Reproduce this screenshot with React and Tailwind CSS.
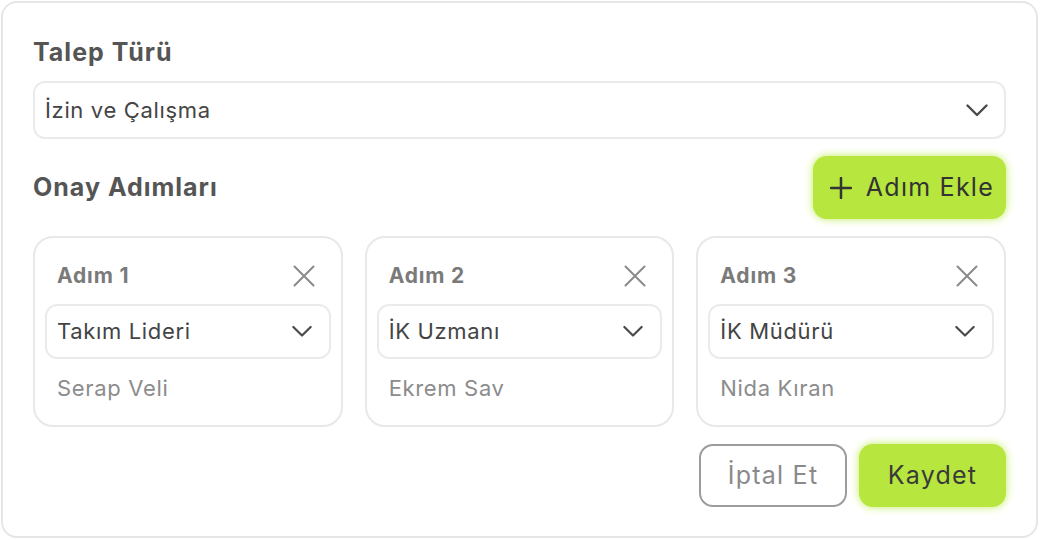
const steps = [
  { title: "Adım 1", role: "Takım Lideri", person: "Serap Veli" },
  { title: "Adım 2", role: "İK Uzmanı", person: "Ekrem Sav" },
  { title: "Adım 3", role: "İK Müdürü", person: "Nida Kıran" },
];

function Chevron({ className }) {
  return (
    <svg width="22" height="13" viewBox="0 0 22 13" fill="none" className={className}>
      <path d="M1.5 1.5 11 11l9.5-9.5" stroke="currentColor" strokeWidth="2.4" strokeLinecap="round" strokeLinejoin="round" />
    </svg>
  );
}

function Cross() {
  return (
    <svg width="22" height="22" viewBox="0 0 22 22" fill="none" className="text-[#8a8a8a]">
      <path d="M1.5 1.5l19 19M20.5 1.5l-19 19" stroke="currentColor" strokeWidth="2" strokeLinecap="round" />
    </svg>
  );
}

function PlusIcon() {
  return (
    <svg width="22" height="22" viewBox="0 0 22 22" fill="none">
      <path d="M11 1v20M1 11h20" stroke="currentColor" strokeWidth="2.5" strokeLinecap="round" />
    </svg>
  );
}

function StepCard({ step }) {
  return (
    <div className="flex flex-col rounded-[20px] border-2 border-[#e8e8e8] px-[10px] pt-[24px] pb-[23px]">
      <div className="flex h-[28px] items-center justify-between pl-[12px] pr-[16px]">
        <span className="text-[21px] font-bold tracking-[0.04em] text-[#7a7a7a]">{step.title}</span>
        <Cross />
      </div>
      <div className="mt-[14px] flex h-[55px] items-center justify-between rounded-[12px] border-2 border-[#ebebeb] pl-[10px] pr-[17px]">
        <span className="text-[22px] tracking-[0.03em] text-[#444]">{step.role}</span>
        <Chevron className="text-[#4a4a4a] w-[20px]" />
      </div>
      <div className="mt-[15px] h-[28px] pl-[12px] text-[22px] leading-[28px] tracking-[0.03em] text-[#8c8c8c]">{step.person}</div>
    </div>
  );
}

export default function App() {
  return (
    <div className="h-[540px] w-[1040px] bg-white p-px" style={{ fontFamily: "Inter, 'Noto Sans', sans-serif" }}>
      <div className="flex h-[537px] w-[1037px] flex-col rounded-[16px] border-2 border-[#e6e6e6] px-[30px] pt-[33px]">
        <h2 className="h-[32px] text-[25px] font-bold leading-[32px] tracking-[0.04em] text-[#555]">Talep Türü</h2>
        <div className="mt-[13px] flex h-[58px] items-center justify-between rounded-[12px] border-2 border-[#ebebeb] pl-[10px] pr-[16px]">
          <span className="text-[22px] tracking-[0.03em] text-[#444]">İzin ve Çalışma</span>
          <Chevron className="text-[#4a4a4a]" />
        </div>

        <div className="mt-[17px] flex items-center justify-between">
          <h2 className="text-[25px] font-bold tracking-[0.04em] text-[#555]">Onay Adımları</h2>
          <button className="flex h-[63px] items-center gap-[14px] rounded-[14px] bg-[#b7e63f] pl-[17px] pr-[12px] text-[25px] tracking-[0.05em] text-[#333] shadow-[0_0_8px_#c2ec5c]">
            <PlusIcon />
            Adım Ekle
          </button>
        </div>

        <div className="mt-[17px] grid grid-cols-3 gap-[22px]">
          {steps.map((s) => (
            <StepCard key={s.title} step={s} />
          ))}
        </div>

        <div className="mt-[17px] flex justify-end gap-[12px]">
          <button className="flex h-[63px] w-[148px] items-center justify-center rounded-[14px] border-2 border-[#9c9c9c] text-[25px] tracking-[0.05em] text-[#8a8a8a]">
            İptal Et
          </button>
          <button className="flex h-[63px] w-[147px] items-center justify-center rounded-[14px] bg-[#b7e63f] text-[25px] tracking-[0.05em] text-[#3a3a3a] shadow-[0_0_8px_#c2ec5c]">
            Kaydet
          </button>
        </div>
      </div>
    </div>
  );
}
